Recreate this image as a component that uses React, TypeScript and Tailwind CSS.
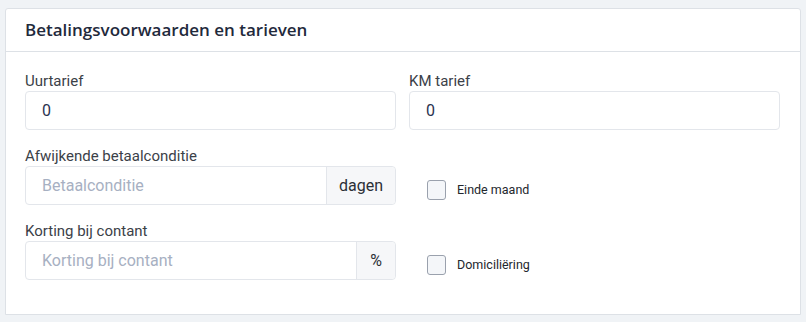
import React from "react"

type FieldProps = {
  label: string
  value?: string
  placeholder?: string
  addon?: string
  addonWidth?: string
}

function Field({ label, value, placeholder, addon, addonWidth }: FieldProps) {
  return (
    <div>
      <label className="block text-[15px] leading-[19px] text-[#3b4148]">{label}</label>
      <div className="flex h-[39px] rounded-[4px] border border-[#e3e6eb] bg-white">
        <input
          className="min-w-0 flex-1 bg-transparent px-[16px] text-[16px] text-[#2a3350] outline-none placeholder:text-[#a7b0c2]"
          defaultValue={value}
          placeholder={placeholder}
        />
        {addon && (
          <span
            className={`flex items-center justify-center rounded-r-[4px] border-l border-[#e3e6eb] bg-[#f6f7f9] text-[16px] text-[#2b2f36] ${addonWidth}`}
          >
            {addon}
          </span>
        )}
      </div>
    </div>
  )
}

function Check({ label }: { label: string }) {
  return (
    <label className="flex items-center pl-[18px]">
      <span className="h-[20px] w-[19px] rounded-[3px] border border-[#9aa1ad] bg-[#f4f6f9]" />
      <span className="ml-[11px] text-[12.5px] text-[#23272d]">{label}</span>
    </label>
  )
}

export default function App() {
  return (
    <div className="min-h-[322px] bg-[#f0f3f6] px-[5px] pt-[8px] pb-[6px]" style={{ fontFamily: "Roboto, 'Noto Sans', sans-serif" }}>
      <div className="rounded-t-[3px] border border-[#dde1e6] bg-white">
        <div className="flex h-[43px] items-center border-b border-[#dde1e6] px-[19px]">
          <h2 className="text-[17px] font-semibold text-[#1f2a3c]" style={{ fontFamily: "'Open Sans', sans-serif" }}>
            Betalingsvoorwaarden en tarieven
          </h2>
        </div>
        <div className="grid grid-cols-2 gap-x-[13px] gap-y-[17px] pt-[20px] pr-[20px] pb-[34px] pl-[19px]">
          <Field label="Uurtarief" value="0" />
          <Field label="KM tarief" value="0" />
          <Field label="Afwijkende betaalconditie" placeholder="Betaalconditie" addon="dagen" addonWidth="w-[69px]" />
          <div className="flex items-end pb-[5px]">
            <Check label="Einde maand" />
          </div>
          <Field label="Korting bij contant" placeholder="Korting bij contant" addon="%" addonWidth="w-[39px]" />
          <div className="flex items-end pb-[5px]">
            <Check label="Domiciliëring" />
          </div>
        </div>
      </div>
    </div>
  )
}
